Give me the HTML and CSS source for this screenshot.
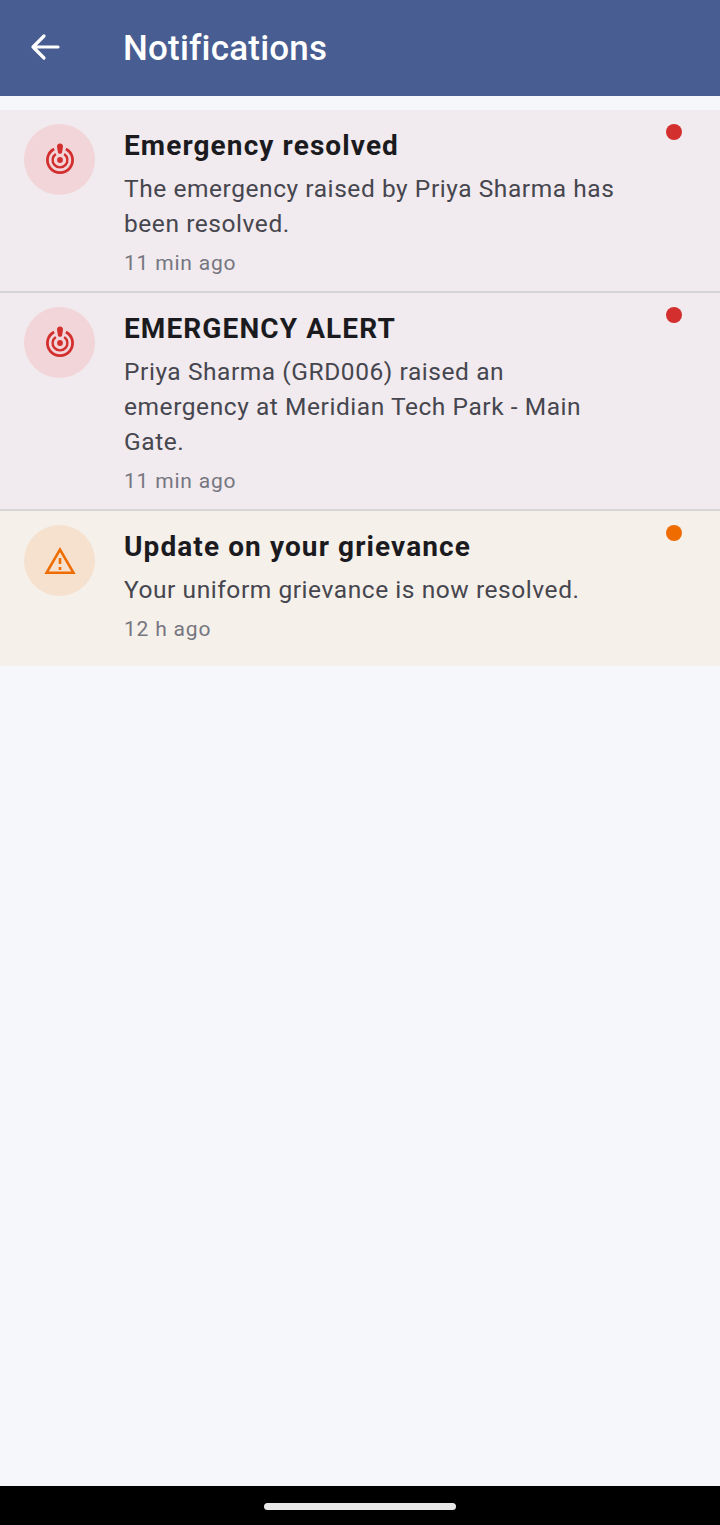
FILE: index.html
```html
<!DOCTYPE html>
<html lang="en">
<head>
  <meta charset="UTF-8" />
  <meta name="viewport" content="width=device-width, initial-scale=1.0" />
  <title>Notifications</title>
  <link rel="stylesheet" href="styles.css">
</head>
<body>
  <header class="app-bar">
    <svg class="back-icon" viewBox="0 0 32 28" width="32" height="28" aria-hidden="true">
      <path d="M29 14H4M15 3L4 14L15 25" fill="none" stroke="#fff" stroke-width="3.2" stroke-linecap="round" stroke-linejoin="round" />
    </svg>
    <h1>Notifications</h1>
  </header>

  <main class="list">
    <article class="item item-red">
      <div class="avatar avatar-red">
        <svg viewBox="0 0 34 34" width="34" height="34" aria-hidden="true">
          <path d="M11.1 5.9A12.6 12.6 0 1 0 22.9 5.9" fill="none" stroke="#d32f2f" stroke-width="2.8" />
          <path d="M12.8 10.9A7.4 7.4 0 1 0 21.2 10.9" fill="none" stroke="#d32f2f" stroke-width="2.4" />
          <circle cx="17" cy="17" r="2.9" fill="#d32f2f" />
          <path d="M17 .5C19 .5 20.2 2 20 3.8L19 9.8C18.7 11.2 15.3 11.2 15 9.8L14 3.8C13.8 2 15 .5 17 .5Z" fill="#d32f2f" />
        </svg>
      </div>
      <div class="content">
        <h2>Emergency resolved</h2>
        <p class="message">The emergency raised by Priya Sharma has been resolved.</p>
        <p class="time">11 min ago</p>
      </div>
      <span class="dot dot-red"></span>
    </article>

    <article class="item item-red">
      <div class="avatar avatar-red">
        <svg viewBox="0 0 34 34" width="34" height="34" aria-hidden="true">
          <path d="M11.1 5.9A12.6 12.6 0 1 0 22.9 5.9" fill="none" stroke="#d32f2f" stroke-width="2.8" />
          <path d="M12.8 10.9A7.4 7.4 0 1 0 21.2 10.9" fill="none" stroke="#d32f2f" stroke-width="2.4" />
          <circle cx="17" cy="17" r="2.9" fill="#d32f2f" />
          <path d="M17 .5C19 .5 20.2 2 20 3.8L19 9.8C18.7 11.2 15.3 11.2 15 9.8L14 3.8C13.8 2 15 .5 17 .5Z" fill="#d32f2f" />
        </svg>
      </div>
      <div class="content">
        <h2>EMERGENCY ALERT</h2>
        <p class="message">Priya Sharma (GRD006) raised an emergency at Meridian Tech Park - Main Gate.</p>
        <p class="time">11 min ago</p>
      </div>
      <span class="dot dot-red"></span>
    </article>

    <article class="item item-orange">
      <div class="avatar avatar-orange">
        <svg viewBox="0 0 32 28" width="32" height="28" aria-hidden="true">
          <path d="M16 2.6L29.4 25.7H2.6Z" fill="none" stroke="#ef6c00" stroke-width="2.6" />
          <rect x="14.7" y="11" width="2.6" height="6" fill="#ef6c00" />
          <rect x="14.7" y="20" width="2.6" height="3" fill="#ef6c00" />
        </svg>
      </div>
      <div class="content">
        <h2>Update on your grievance</h2>
        <p class="message">Your uniform grievance is now resolved.</p>
        <p class="time">12 h ago</p>
      </div>
      <span class="dot dot-orange"></span>
    </article>
  </main>

  <div class="nav-bar">
    <span class="nav-handle"></span>
  </div>
</body>
</html>
```

FILE: styles.css
```css
html, body {
  height: 100%;
}

body {
  margin: 0;
  display: flex;
  flex-direction: column;
  background-color: #f5f7fb;
  font-family: Roboto, "Liberation Sans", sans-serif;
}

.app-bar {
  height: 96px;
  flex-shrink: 0;
  display: flex;
  align-items: center;
  background-color: #485d92;
  color: white;
}

.back-icon {
  margin-left: 29px;
  margin-right: 62px;
  margin-bottom: 2px;
}

.app-bar h1 {
  margin: 0;
  font-size: 35px;
  font-weight: 500;
  letter-spacing: 0.2px;
}

.list {
  flex: 1;
  padding-top: 14px;
}

.item {
  display: flex;
  align-items: flex-start;
  padding: 14px 38px 14px 24px;
  border-bottom: 2px solid #d5d4d7;
}

.item:last-child {
  padding-bottom: 23px;
  border-bottom: none;
}

.item-red {
  background-color: #f1eaee;
}

.item-orange {
  background-color: #f5f0ea;
}

.avatar {
  width: 71px;
  height: 71px;
  flex-shrink: 0;
  margin-right: 29px;
  border-radius: 50%;
  display: flex;
  align-items: center;
  justify-content: center;
}

.avatar-red {
  background-color: #f2d5d8;
}

.avatar-orange {
  background-color: #f6e1cf;
}

.content {
  flex: 1;
  min-width: 0;
  padding-right: 40px;
}

.content h2 {
  margin: 1px 0 5px;
  font-size: 28px;
  line-height: 41px;
  font-weight: 700;
  letter-spacing: 1.1px;
  color: #1b1b1f;
}

.message {
  margin: 0;
  font-size: 24.5px;
  line-height: 35px;
  letter-spacing: 0.56px;
  color: #46464f;
}

.time {
  margin: 8px 0 0;
  font-size: 21px;
  line-height: 28px;
  letter-spacing: 0.8px;
  color: #767680;
}

.dot {
  width: 16px;
  height: 16px;
  flex-shrink: 0;
  border-radius: 50%;
}

.dot-red {
  background-color: #d32f2f;
}

.dot-orange {
  background-color: #ef6c00;
}

.nav-bar {
  height: 39px;
  flex-shrink: 0;
  display: flex;
  justify-content: center;
  padding-top: 17px;
  box-sizing: border-box;
  background-color: black;
}

.nav-handle {
  width: 192px;
  height: 7px;
  border-radius: 4px;
  background-color: #e8e8e8;
}
```
